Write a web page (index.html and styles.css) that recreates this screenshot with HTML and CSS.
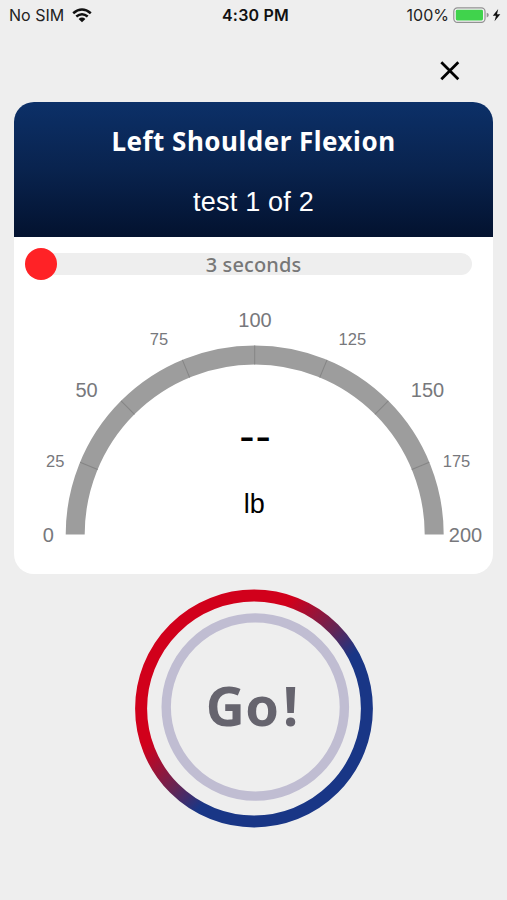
FILE: index.html
```html
<!DOCTYPE html>
<html lang="en">
<head>
<meta charset="utf-8">
<meta name="viewport" content="width=device-width, initial-scale=1">
<title>Left Shoulder Flexion</title>
<link rel="stylesheet" href="styles.css">
</head>
<body>
<header class="status">
  <div class="status-left">
    <span class="carrier">No SIM</span>
    <svg class="wifi" width="20" height="15" viewBox="0 0 20 15">
      <g fill="none" stroke="#111" stroke-width="2.6"><path d="M1.2 5.2Q10-2.2 18.8 5.2"/><path d="M4.3 8.6Q10 3.9 15.7 8.6"/></g>
      <path d="M6.6 11Q10 8.2 13.4 11L10 14.3Z" fill="#111"/>
    </svg>
  </div>
  <span class="clock">4:30 PM</span>
  <div class="status-right">
    <span class="percent">100%</span>
    <svg class="battery" width="49" height="17" viewBox="0 0 49 17">
      <rect x=".8" y=".8" width="31.2" height="14.6" rx="3.6" fill="#f4f0f4" stroke="#929292" stroke-width="1.2"/>
      <rect x="2.8" y="2.8" width="27.2" height="10.6" rx="1.4" fill="#40d34c"/>
      <path d="M33.7 5.8Q35.8 6.2 35.8 8T33.7 10.4Z" fill="#929292"/>
      <path d="M45.2 2L39.8 8.7H43L41.5 14.2L47.3 7.2H44Z" fill="#111"/>
    </svg>
  </div>
</header>
<nav class="toolbar">
  <button class="close" aria-label="Close"><svg width="20" height="20" viewBox="0 0 20 20"><path d="M1.3 1.3L18.3 18.3M18.3 1.3L1.3 18.3" stroke="#000" stroke-width="2.7"/></svg></button>
</nav>
<main class="card">
  <div class="card-head">
    <h1>Left Shoulder Flexion</h1>
    <p>test 1 of 2</p>
  </div>
  <div class="timer">
    <span class="timer-label">3 seconds</span>
    <span class="knob"></span>
  </div>
  <svg class="gauge" width="479" height="280" viewBox="14 293 479 280">
    <path d="M75.2 534.5A179.5 179.5 0 0 1 434.2 534.5" fill="none" stroke="#9d9d9d" stroke-width="19"/>
    <g class="ticks">
      <path d="M65.7 534.5H84.7" transform="rotate(22.5 254.7 534.5)"/>
      <path d="M65.7 534.5H84.7" transform="rotate(45 254.7 534.5)"/>
      <path d="M65.7 534.5H84.7" transform="rotate(67.5 254.7 534.5)"/>
      <path d="M65.7 534.5H84.7" transform="rotate(90 254.7 534.5)"/>
      <path d="M65.7 534.5H84.7" transform="rotate(112.5 254.7 534.5)"/>
      <path d="M65.7 534.5H84.7" transform="rotate(135 254.7 534.5)"/>
      <path d="M65.7 534.5H84.7" transform="rotate(157.5 254.7 534.5)"/>
    </g>
    <g class="major">
      <text x="48.3" y="541.5">0</text>
      <text x="86.5" y="397.2">50</text>
      <text x="255" y="327.2">100</text>
      <text x="427.5" y="397.2">150</text>
      <text x="465.5" y="541.5">200</text>
    </g>
    <g class="minor">
      <text x="55.2" y="466.7">25</text>
      <text x="158.9" y="345.4">75</text>
      <text x="352.3" y="345.4">125</text>
      <text x="456.5" y="466.7">175</text>
    </g>
    <text class="reading" x="255.5" y="452">--</text>
    <text class="unit" x="254.3" y="512.5">lb</text>
  </svg>
</main>
<button class="go">
  <svg width="240" height="240" viewBox="134 588 240 240">
    <defs><linearGradient id="ring" x1="0" y1="0" x2="1" y2="1">
      <stop offset=".34" stop-color="#d1001b"/><stop offset=".5" stop-color="#652553"/><stop offset=".6" stop-color="#193686"/>
    </linearGradient></defs>
    <circle cx="254" cy="708.5" r="112.9" fill="none" stroke="url(#ring)" stroke-width="12"/>
    <circle cx="255.3" cy="707" r="89.1" fill="none" stroke="#c0bdd2" stroke-width="9.4"/>
    <text class="go-label" x="252.8" y="725.5" dx="0 -1 2.5">Go!</text>
  </svg>
</button>
</body>
</html>
```
FILE: styles.css
```css
* { box-sizing: border-box; }
body {
  margin: 0;
  height: 900px;
  overflow: hidden;
  background: #eee;
  font-family: "Liberation Sans", Arial, sans-serif;
  display: flex;
  flex-direction: column;
}
button { border: 0; padding: 0; background: none; display: block; }
svg { display: block; }
.status {
  height: 30px;
  padding: 0 5px 0 9px;
  display: grid;
  grid-template-columns: 1fr auto 1fr;
  align-items: center;
  font: 16px/30px Inter, sans-serif;
  color: #222;
}
.status-left, .status-right { display: flex; align-items: center; }
.status-left { gap: 8px; }
.status-right { justify-content: flex-end; gap: 4px; }
.clock { font-weight: 600; color: #111; letter-spacing: .2px; }
.toolbar {
  height: 72px;
  display: flex;
  justify-content: flex-end;
  padding: 31px 47px 0 0;
}
.close { width: 20px; height: 20px; }
.card {
  width: 479px;
  height: 472px;
  margin-left: 14px;
  border-radius: 20px;
  overflow: hidden;
  background: #fff;
}
.card-head {
  height: 135px;
  background: linear-gradient(#0c3068, #09234e 50%, #03122f);
  color: #fff;
  text-align: center;
  padding-top: 21px;
}
.card-head h1 {
  margin: 0;
  font: 700 26px/36px "Noto Sans", sans-serif;
  letter-spacing: .5px;
}
.card-head p {
  margin: 28px 0 0;
  font-size: 27px;
  line-height: 30px;
  letter-spacing: .2px;
}
.timer {
  position: relative;
  height: 22px;
  margin: 16px 21px 18px 14px;
  border-radius: 11px;
  background: #eee;
  display: flex;
  justify-content: center;
}
.timer-label {
  font: 500 20px/23px "Noto Sans", sans-serif;
  color: #777;
  padding-left: 7px;
  letter-spacing: .1px;
}
.knob {
  position: absolute;
  left: -3px;
  top: -5px;
  width: 32px;
  height: 32px;
  border-radius: 50%;
  background: #ff2226;
}
.ticks { stroke: #858585; stroke-width: 1; }
.gauge text { text-anchor: middle; }
.major { font-size: 20px; fill: #77787c; }
.minor { font-size: 16.5px; fill: #77787c; }
.gauge .reading { font-size: 46px; letter-spacing: 1px; fill: #000; }
.unit { font-size: 27px; fill: #000; }
.go { width: 240px; height: 240px; margin: 14px 0 0 134px; }
.go-label {
  font: 700 54px "Noto Sans", sans-serif;
  letter-spacing: 1.5px;
  fill: #66646e;
  text-anchor: middle;
}
```
